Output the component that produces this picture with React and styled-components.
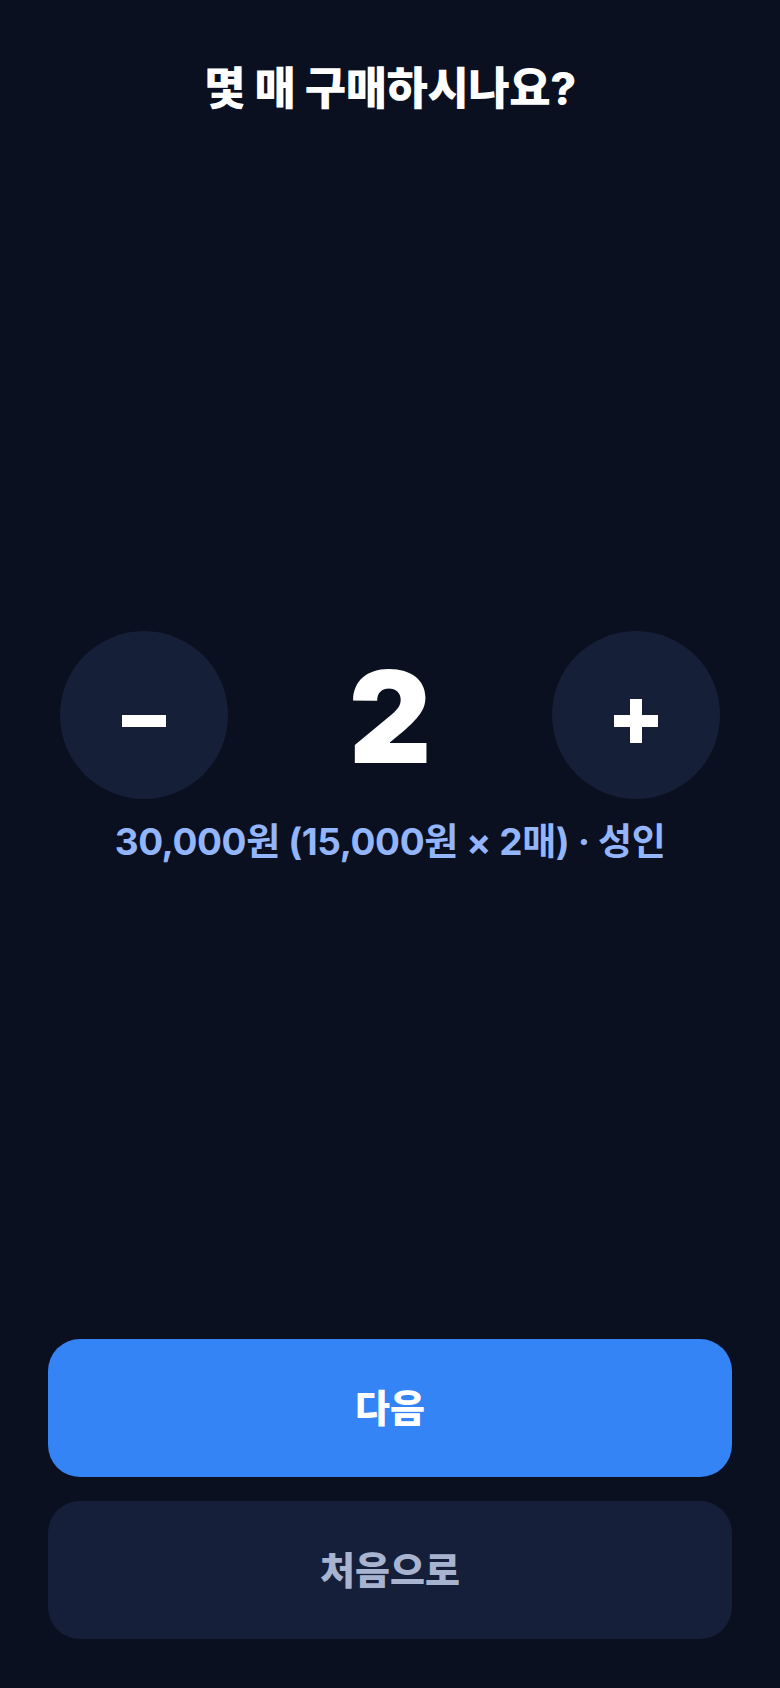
import React, { useState } from "react";
import styled, { createGlobalStyle } from "styled-components";

const UNIT_PRICE = 15000;

const GlobalStyle = createGlobalStyle`
  html, body {
    margin: 0;
    padding: 0;
    background: #0a1020;
  }
  * {
    box-sizing: border-box;
  }
`;

const Page = styled.div`
  min-height: 1688px;
  display: flex;
  flex-direction: column;
  padding: 62px 48px 49px;
  background: #0a1020;
  font-family: Inter, "Noto Sans CJK KR", "Noto Sans", sans-serif;
  color: #ffffff;
`;

const Title = styled.h1`
  margin: 0;
  text-align: center;
  font-size: 45px;
  line-height: 54px;
  font-weight: 800;
  letter-spacing: -0.5px;
`;

const Middle = styled.div`
  flex: 1;
  display: flex;
  flex-direction: column;
  align-items: center;
  justify-content: center;
  padding-top: 40px;
`;

const StepperRow = styled.div`
  width: 660px;
  display: flex;
  align-items: center;
  justify-content: space-between;
`;

const RoundButton = styled.button`
  width: 168px;
  height: 168px;
  border-radius: 50%;
  border: none;
  background: #161f38;
  display: flex;
  align-items: center;
  justify-content: center;
  padding: 12px 0 0;
  cursor: pointer;
`;

const Count = styled.div`
  font-size: 128px;
  line-height: 1;
  font-weight: 900;
  color: #ffffff;
  padding-top: 4px;
`;

const Price = styled.p`
  margin: 20px 0 0;
  font-size: 37px;
  line-height: 46px;
  font-weight: 700;
  color: #93b5fb;
  letter-spacing: -0.4px;
`;

const Footer = styled.div`
  display: flex;
  flex-direction: column;
  gap: 24px;
`;

const ActionButton = styled.button`
  height: 138px;
  border: none;
  border-radius: 32px;
  padding: 0 0 6px;
  background: ${(p) => (p.$primary ? "#3484f6" : "#161f3a")};
  color: ${(p) => (p.$primary ? "#ffffff" : "#a8b3cf")};
  font-family: inherit;
  font-size: 38px;
  font-weight: 800;
  cursor: pointer;
`;

const MinusIcon = () => (
  <svg width="44" height="44" viewBox="0 0 44 44">
    <rect x="0" y="16" width="44" height="12" fill="#fff" />
  </svg>
);

const PlusIcon = () => (
  <svg width="44" height="44" viewBox="0 0 44 44">
    <rect x="0" y="16" width="44" height="12" fill="#fff" />
    <rect x="16" y="0" width="12" height="44" fill="#fff" />
  </svg>
);

const fmt = (n) => n.toLocaleString("en-US");

const App = () => {
  const [count, setCount] = useState(2);

  return (
    <>
      <GlobalStyle />
      <Page>
        <Title>몇 매 구매하시나요?</Title>
        <Middle>
          <StepperRow>
            <RoundButton onClick={() => setCount((c) => Math.max(1, c - 1))}>
              <MinusIcon />
            </RoundButton>
            <Count>{count}</Count>
            <RoundButton onClick={() => setCount((c) => c + 1)}>
              <PlusIcon />
            </RoundButton>
          </StepperRow>
          <Price>
            {fmt(UNIT_PRICE * count)}원 ({fmt(UNIT_PRICE)}원 × {count}매) · 성인
          </Price>
        </Middle>
        <Footer>
          <ActionButton $primary>다음</ActionButton>
          <ActionButton>처음으로</ActionButton>
        </Footer>
      </Page>
    </>
  );
};

export default App;
